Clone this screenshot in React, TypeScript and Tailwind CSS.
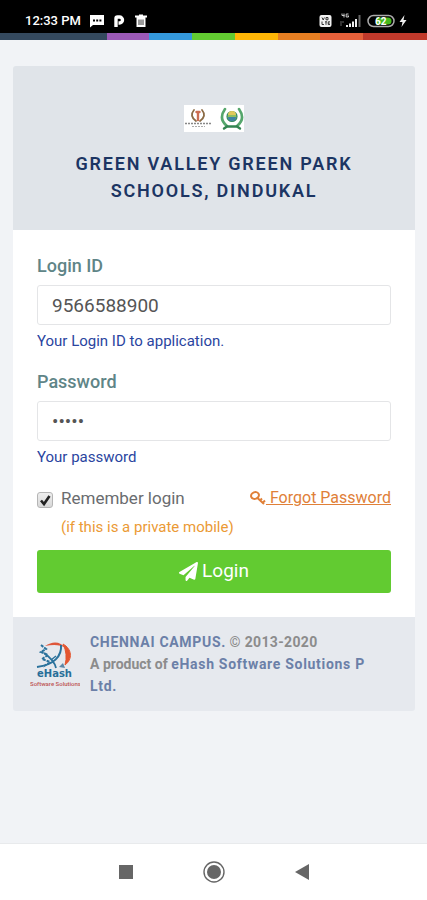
import { FaPaperPlane } from "react-icons/fa";

const STRIPES = [
  "w-1/4 bg-[#34495e]",
  "w-1/10 bg-[#9b59b6]",
  "w-1/10 bg-[#3498db]",
  "w-1/10 bg-[#62cb31]",
  "w-1/10 bg-[#ffb606]",
  "w-1/10 bg-[#e67e22]",
  "w-1/10 bg-[#e5603a]",
  "flex-1 bg-[#c0392b]",
];

function StatusBar() {
  return (
    <header className="flex h-[33px] items-end justify-between bg-black pr-5 pb-1 pl-[25px] text-white">
      <div className="flex items-center">
        <span className="text-[13px] leading-4 font-medium">12:33 PM</span>
        {/* Message */}
        <svg className="ml-2 h-4 w-4" viewBox="0 0 16 16">
          <path d="M1 2h14v10H4l-3 2.500z" fill="#fff" />
          <path d="M4 6.500h2v2H4zM7.200 6.500h2v2h-2zM10.400 6.500h2v2h-2z" fill="#000" />
        </svg>
        {/* Parking */}
        <svg className="ml-[6px] h-4 w-4" viewBox="0 0 16 16">
          <path
            d="M5 14V5.500Q5 4 6.500 4H8.500A3 3 0 0 1 8.500 10H7.500"
            fill="none"
            stroke="#fff"
            strokeWidth="3.400"
          />
        </svg>
        {/* Trash */}
        <svg className="ml-[6px] h-4 w-4" viewBox="0 0 16 16">
          <path d="M2 3.500h12M6 2.500h4" stroke="#fff" strokeWidth="2" />
          <path d="M3.500 4h9v10h-9z" fill="#fff" />
          <path d="M6 6.500v5.500M8 6.500v5.500M10 6.500v5.500" stroke="#000" strokeWidth="0.800" />
        </svg>
      </div>
      <div className="flex items-center">
        {/* VoLTE */}
        <svg className="h-4 w-[14px]" viewBox="0 0 14 16">
          <rect x="0.500" y="2" width="12" height="12" rx="2" fill="#f1f1f1" />
          <path
            d="M3 4.500l1.200 2.500 1.200-2.500M7 4.500h2v2.300H7zM3 8.500v3h2M6 8.800h2M7 8.800v3M11 8.800H9.200v2.700H11M9.200 10.200h1.500"
            fill="none"
            stroke="#222"
            strokeWidth="0.900"
          />
        </svg>
        {/* Signal */}
        <svg className="ml-[7px] h-4 w-[22px]" viewBox="0 0 22 16">
          <path d="M2 0.500v2h2.500M4 0.500v4M8.500 1H6.200v3h2.300V2.800H7.500" fill="none" stroke="#ccc" />
          <path d="M1 8v5M3 8v2" stroke="#666" />
          <path d="M6 12h2v2H6zM9 10.500h2V14H9zM12 8.500h2V14h-2zM15 6h2v8h-2z" fill="#eee" />
          <path d="M19.500 2v12" stroke="#666" strokeWidth="2" />
        </svg>
        {/* Battery */}
        <svg className="ml-[5px] h-4 w-[29px]" viewBox="0 0 29 16">
          <rect x="1" y="2.500" width="26" height="11" rx="5.500" fill="none" stroke="#aaa" strokeWidth="1.500" />
          <path d="M9 4.500h12a3.500 3.500 0 0 1 0 7H9z" fill="#46b81c" />
          <text x="8" y="11.500" fill="#fff" fontSize="10" fontWeight="700">
            62
          </text>
        </svg>
        {/* Charging */}
        <svg className="ml-[3px] h-4 w-[8px]" viewBox="0 0 8 16">
          <path d="M5.500 2L0.500 9h3L2.500 14 7.500 7h-3z" fill="#eee" />
        </svg>
      </div>
    </header>
  );
}

function SchoolLogo() {
  return (
    <svg className="h-[27px] w-[60px] bg-white" viewBox="0 0 60 27">
      <g fill="none" strokeLinecap="round">
        <path d="M10 5Q5 11 12 16M18 5Q23 11 16 16" stroke="#8b6b46" strokeWidth="1.800" />
        <path d="M14 7v8M12.500 7h3" stroke="#cc6d52" strokeWidth="2.400" />
        <path d="M1 18.500h26" stroke="#888" strokeWidth="1.300" strokeDasharray="2 1" strokeLinecap="butt" />
        <path d="M8 21.500h13" stroke="#aaa" strokeDasharray="2 1" strokeLinecap="butt" />
        <path d="M41 4Q34 14 43 21M55 4Q62 14 53 21" stroke="#55a66c" strokeWidth="2.600" />
        <path d="M40 23.500l3-2h10l3 2" stroke="#328451" strokeWidth="2.400" />
      </g>
      <circle cx="48" cy="11.500" r="5" fill="#8fbf62" stroke="#338864" strokeWidth="1.200" />
      <path d="M44 10a4 4 0 0 1 8 0z" fill="#e0c95c" />
      <path d="M44 12h8a4 4 0 0 1-8 0z" fill="#3c83a5" />
    </svg>
  );
}

function CompanyLogo() {
  return (
    <svg className="h-12 w-[50px] shrink-0" viewBox="0 0 50 48">
      <path d="M15 6Q27-2 36 8Q28 3 15 6z" fill="#df573b" />
      <path d="M33 4C42 9 43 19 35 25Q38 14 33 4z" fill="#e45731" stroke="#e45731" />
      <g fill="none" stroke="#2b729c">
        <path d="M11 5l5 4-5 3 7 3-6 4 8 3-7 5" strokeWidth="2" strokeDasharray="3 1" />
        <path d="M31 5C32 16 24 25 7 27" strokeWidth="2" />
        <path d="M14 13C21 18 25 23 26 28" strokeWidth="1.800" />
        <path d="M21 20l5-4" strokeWidth="1.500" />
      </g>
      <path d="M29 27l4-4 2 5z" fill="#5b88a8" />
      <text x="7" y="37" fill="#286e98" fontSize="10" fontWeight="700" fontFamily="DejaVu Sans, sans-serif">
        eHash
      </text>
      <text x="0" y="46" fill="#bd5454" fontSize="6" fontWeight="500">
        Software Solutions
      </text>
    </svg>
  );
}

function KeyIcon() {
  return (
    <svg className="h-4 w-4" viewBox="0 0 16 16" fill="none" stroke="currentColor">
      <ellipse cx="5" cy="5.500" rx="4" ry="3.300" strokeWidth="2" transform="rotate(-20 5 5.500)" />
      <path d="M7.500 8l6.500 6M10 10.500l2-2M12.500 13l2.500-2.500" strokeWidth="2" />
    </svg>
  );
}

interface FieldProps {
  id: string;
  label: string;
  type: string;
  value: string;
  help: string;
}

function Field({ id, label, type, value, help }: FieldProps) {
  return (
    <div className="mb-[19px]">
      <label htmlFor={id} className="block text-lg leading-6 font-medium text-[#5f8587]">
        {label}
      </label>
      <input
        id={id}
        type={type}
        defaultValue={value}
        className="mt-[7px] block h-10 w-full rounded-[3px] border border-[#e4e5e7] bg-white px-[14px] text-[19px] text-[#555555] outline-none focus:border-[#62cb31]"
      />
      <p className="mt-[6px] text-[15px] leading-5 text-[#2a45a0]">{help}</p>
    </div>
  );
}

function LoginForm() {
  return (
    <form className="bg-white p-6" onSubmit={(e) => e.preventDefault()}>
      <Field id="login" label="Login ID" type="text" value="9566588900" help="Your Login ID to application." />
      <Field id="password" label="Password" type="password" value="12345" help="Your password" />

      <div className="flex items-center justify-between leading-6">
        <div className="flex items-center">
          <div className="grid w-6 items-center pt-1">
            <input
              id="remember"
              type="checkbox"
              defaultChecked
              className="peer col-start-1 row-start-1 h-4 w-4 appearance-none rounded-[3px] border border-[#b5b5b5] bg-linear-to-b from-[#eeeeee] to-[#d8d8d8]"
            />
            <svg
              className="pointer-events-none invisible col-start-1 row-start-1 h-4 w-4 peer-checked:visible"
              viewBox="0 0 16 16"
            >
              <path d="M4 8.500l3 3.500 5.500-8" fill="none" stroke="#222" strokeWidth="2.600" />
            </svg>
          </div>
          <label htmlFor="remember" className="text-[17px] text-[#6a6c6f]">
            Remember login
          </label>
        </div>
        <a href="#forgot" className="flex items-center text-base text-[#e08038]">
          <KeyIcon />
          <span className="whitespace-pre underline"> Forgot Password</span>
        </a>
      </div>
      <p className="mt-[7px] pl-6 text-[15px] leading-5 text-[#eb9a35]">(if this is a private mobile)</p>

      <button
        type="submit"
        className="mt-[13px] flex h-[43px] w-full items-center justify-center gap-1 rounded-[3px] bg-[#62cb31] text-[19px] text-white"
      >
        <FaPaperPlane />
        Login
      </button>
    </form>
  );
}

export default function App() {
  return (
    <div className="flex min-h-screen flex-col bg-[#f1f3f6] font-[Roboto,sans-serif]">
      <StatusBar />
      <div className="flex h-[7px]">
        {STRIPES.map((stripe) => (
          <div key={stripe} className={stripe} />
        ))}
      </div>

      <main className="flex-1 pt-[26px] pr-3 pb-6 pl-[13px]">
        <section className="overflow-hidden rounded-[3px]">
          <div className="flex flex-col items-center bg-[#e0e4e9] px-6 pt-[39px] pb-[26px]">
            <SchoolLogo />
            <h1 className="mt-[18px] text-center text-lg leading-[27px] font-semibold tracking-widest text-[#1c3563]">
              GREEN VALLEY GREEN PARK SCHOOLS, DINDUKAL
            </h1>
          </div>

          <LoginForm />

          <footer className="flex items-center bg-[#e6e9ee] py-[14px] pr-8 pl-[17px]">
            <CompanyLogo />
            <div className="ml-[10px] text-sm leading-[22px] font-bold text-[#8c8c8c]">
              <p>
                <span className="tracking-wider text-[#6b80a8]">CHENNAI CAMPUS.</span>{" "}
                <span className="tracking-wide">© 2013-2020</span>
              </p>
              <p>
                A product of <span className="tracking-wider text-[#6b80a8]">eHash Software Solutions P Ltd.</span>
              </p>
            </div>
          </footer>
        </section>
      </main>

      <nav className="grid h-[57px] grid-cols-[1fr_auto_1fr] items-center gap-[70px] border-t border-[#e8eaec] bg-white text-[#666666]">
        <button type="button" aria-label="Recent apps" className="justify-self-end">
          <svg className="h-[14px] w-[14px]" viewBox="0 0 14 14">
            <path d="M0 0h14v14H0z" fill="currentColor" />
          </svg>
        </button>
        <button type="button" aria-label="Home">
          <svg className="h-[22px] w-[22px]" viewBox="0 0 22 22">
            <circle cx="11" cy="11" r="10" fill="none" stroke="currentColor" strokeWidth="1.400" />
            <circle cx="11" cy="11" r="7" fill="currentColor" />
          </svg>
        </button>
        <button type="button" aria-label="Back" className="justify-self-start">
          <svg className="h-4 w-[14px]" viewBox="0 0 14 16">
            <path d="M14 0v16L0 8z" fill="currentColor" />
          </svg>
        </button>
      </nav>
    </div>
  );
}
